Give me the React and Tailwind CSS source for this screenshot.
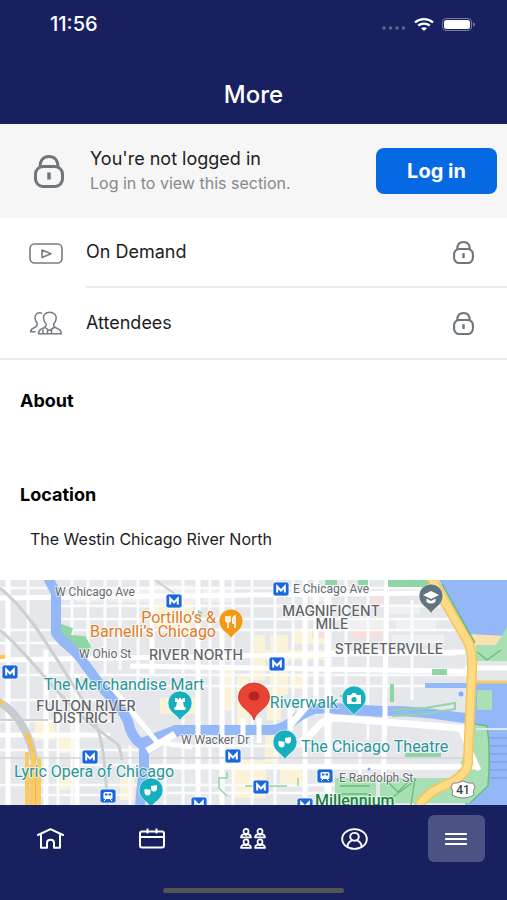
import React from "react";

function LockIcon({ className }) {
  return (
    <svg viewBox="0 0 30 33" fill="none" stroke="#6f767b" strokeWidth="3" className={className} aria-hidden="true">
      <rect x="1.5" y="11.5" width="27" height="20" rx="7.5" />
      <path d="M6 12C6 5.500 9.500 1.500 15 1.500S24 5.500 24 12" />
      <path d="M15 17.500v7" strokeWidth="3.500" />
    </svg>
  );
}

function VideoIcon() {
  return (
    <svg viewBox="0 0 34 21" fill="none" stroke="#777d82" strokeWidth="1.600" className="h-[21px] w-[34px]" aria-hidden="true">
      <rect x="1" y="1" width="32" height="19" rx="4.500" />
      <path d="M13 7v7.500l9-3.700z" strokeLinejoin="round" />
    </svg>
  );
}

function AttendeesIcon() {
  return (
    <svg viewBox="0 0 34 24" fill="none" stroke="#777d82" strokeWidth="1.500" strokeLinejoin="round" strokeLinecap="round" className="h-[24px] w-[34px]" aria-hidden="true">
      <path d="M12.500 2.200C9 1 5.800 3 6 7c.1 2 .8 3.500 1.900 4.600.7 2.400-.2 4-2.400 4.900C3 17.500 1.800 18.500 1.500 20.800H6" />
      <path d="M20.500 1.200c-4 0-6.300 2.700-6 6.300.2 2.200 1.200 3.900 2.600 5.200.5 2.500-.6 3.700-3.100 4.500-3 .9-4.300 2.100-4.500 5.600h22.800c-.2-3.500-1.600-4.700-4.600-5.600-2.500-.8-3.500-2-3-4.500 1.400-1.300 2.300-3 2.500-5.200.3-3.600-2.500-6.300-6.700-6.300z" />
      <path d="M16 16.500l4.500 3 4.700-3M18.500 19v3.600M22.500 19v3.600M14 19v3.600" />
    </svg>
  );
}

const navIcons = {
  Home: (
    <svg viewBox="0 0 27 21" fill="none" stroke="currentColor" strokeWidth="2" strokeLinejoin="round" strokeLinecap="round" className="h-[21px] w-[27px]" aria-hidden="true">
      <path d="M1 7L13.500 1.200 26 7M4 6v13.800h6V15c0-4.200 7-4.200 7 0v4.800h6V6" />
    </svg>
  ),
  Agenda: (
    <svg viewBox="0 0 26 21" fill="none" stroke="currentColor" strokeWidth="2" className="h-[21px] w-[26px]" aria-hidden="true">
      <rect x="1" y="3.500" width="24" height="16" rx="2" />
      <path d="M1 9h24M8.500 0.500v5M17.500 0.500v5" />
    </svg>
  ),
  Groups: (
    <svg viewBox="0 0 26 21" fill="none" stroke="currentColor" strokeWidth="1.700" strokeLinejoin="round" className="h-[21px] w-[26px]" aria-hidden="true">
      {[0, 14].map((x) =>
        [0, 10.5].map((y) => (
          <g key={`${x}-${y}`} transform={`translate(${x} ${y})`}>
            <circle cx="6" cy="3.400" r="2.500" />
            <path d="M1 9.300c.2-2 1.200-2.800 3.200-3.200l1.800 1 1.800-1c2 .4 3 1.200 3.200 3.200z" />
          </g>
        ))
      )}
    </svg>
  ),
  Profile: (
    <svg viewBox="0 0 27 22" fill="none" stroke="currentColor" strokeWidth="1.900" className="h-[22px] w-[27px]" aria-hidden="true">
      <ellipse cx="13.500" cy="11" rx="12.300" ry="9.900" />
      <ellipse cx="13.500" cy="8.800" rx="4.300" ry="3.900" />
      <path d="M6.300 18.500c.4-3.300 2-5.200 5-6.100M20.700 18.500c-.4-3.300-2-5.200-5-6.100" />
    </svg>
  ),
  More: (
    <svg viewBox="0 0 24 14" fill="none" stroke="currentColor" strokeWidth="2.200" strokeLinecap="round" className="h-[14px] w-[24px]" aria-hidden="true">
      <path d="M2 2h20M2 7h20M2 12h20" />
    </svg>
  ),
};

function Station({ x, y, train }) {
  return (
    <g transform={`translate(${x} ${y})`}>
      <rect x="-8" y="-7" width="16" height="14" rx="2.500" fill="#1b68dc" stroke="#fff" strokeWidth="0.800" />
      {train ? (
        <g>
          <rect x="-4.500" y="-4" width="9" height="7" rx="1.500" fill="#fff" />
          <path d="M-3-2.500h2.400v2H-3zM.6-2.500H3v2H.6z" fill="#1b68dc" />
          <path d="M-4 5l2-2M4 5L2 3" stroke="#fff" />
        </g>
      ) : (
        <path d="M-3.800 3.500v-6L0 1.500l3.800-4v6" fill="none" stroke="#fff" strokeWidth="2" />
      )}
    </g>
  );
}

function Pin({ x, y, color, children }) {
  return (
    <g transform={`translate(${x} ${y})`}>
      <path d="M0 17C-1.500 11-12 9-12-1a12 12 0 0 1 24 0C12 9 1.500 11 0 17z" fill={color} stroke="#fff" strokeWidth="0.600" />
      {children}
    </g>
  );
}

const masks = (
  <g fill="#fff">
    <path d="M-6.500-2l6 .8v3.500c-.7 3-5 3-6-.3z" />
    <path d="M0-5l6-1v4c-.6 3-4.500 3.500-5.800.8z" />
  </g>
);

const blocks = [
  [76, 8, 26, 14], [108, 8, 42, 14], [155, 8, 42, 14], [203, 8, 32, 14], [310, 8, 20, 14],
  [390, 24, 30, 10], [396, 40, 40, 10], [392, 55, 52, 9], [340, 40, 46, 8],
];

function CityMap() {
  return (
    <svg viewBox="0 0 507 225" preserveAspectRatio="xMidYMid slice" role="img" aria-label="Map of downtown Chicago" className="block h-[225px] w-full font-[Roboto,sans-serif]">
      <rect width="507" height="225" fill="#e5e7ea" />

      {/* shaded commercial blocks */}
      <g fill="#fbf3d8">
        <path d="M155 5h38v50h-18v-8h-20zM250 55h15v45h-15zM270 55h18v60h-18zM293 50h34v14h-34zM237 95h12v60h-12zM160 118h36v16h-36zM222 85h12v45h-12zM265 70h60v10h-60zM290 95h16v14h-16zM267 110h14v30h-14zM234 180h32v38h-32zM280 185h22v22h-22zM265 155h14v28h-14zM120 198h14v22h-14zM60 155h16v18H60zM60 190h14v20H60zM35 140h20v20H35z" />
      </g>
      <path d="M373 12h8v16h-8zM353 38h28v20h-28zM312 50h16v8h-16z" fill="#f9dedd" />
      <g fill="#eef0f2">
        {blocks.map(([x, y, w, h]) => (
          <rect key={`${x}-${y}`} x={x} y={y} width={w} height={h} />
        ))}
      </g>

      {/* minor streets */}
      <path d="M0 8H430M60 26H440M60 39H450M64 50H455M0 50H50M0 95H470M110 106H470M0 63H60M0 120H100M0 141H110M0 170H150M170 166H380M80 185H470M0 205H340M30 215H130M160 213H340" stroke="#fafbfc" strokeWidth="2.500" fill="none" />
      <path d="M28 0V225M72 0V225M88 0V80M105 0V95M120 0V90M138 0V110M183 0V225M210 0V225M233 0V225M252 0V225M275 0V225M293 0V140M330 0V225M346 0V115M368 0V160M412 20V120M360 165V225M58 110V225M130 165V225M165 165V225" stroke="#fafbfc" strokeWidth="3" fill="none" />

      {/* major streets */}
      <path d="M0 18L507 12M0 80L465 72M330 73H455M130 86L507 92M0 155H110M150 187H465" stroke="#fff" strokeWidth="5" fill="none" />
      <path d="M8 0V225M46 70V225M152 0V95M198 0V225M222 0V225M316 0V135M327 0V225M387 0L383 225M305 0V225M77 95V225" stroke="#fff" strokeWidth="5" fill="none" />
      <path d="M0 178H470" stroke="#d3d5d8" strokeWidth="1.500" />

      {/* rail corridors */}
      <path d="M0 8C25 28 45 60 70 100S105 145 107 225M0 50C30 75 60 120 92 145S118 160 122 180" stroke="#cdd0d3" strokeWidth="3" fill="none" />
      <path d="M0 140H48M155 0l20 14" stroke="#cdd0d3" strokeWidth="2" />

      {/* parks along the north branch */}
      <path d="M61 44l12 4-2 7 14 1 6 10-3 7-16-6-12-12zM198 30l4 2v6l-5-2z" fill="#8fd5a5" />
      <path d="M325 0h12v5h-12zM358 0h10v5h-10zM388 0h46l3 7h-49z" fill="#8fd5a5" />

      {/* river */}
      <path d="M48-2l8 15v40c5 9 21 17 28 30l17 23c14 17 26 26 29 43 5 12 12 17 19 16 12-1 15-14 37-15h82c22 1 26-17 48-21 22-3 46 2 76 2 35 0 58 6 84 8" stroke="#94b8f7" strokeWidth="10" fill="none" strokeLinejoin="round" />
      <path d="M141 158L175 145H250V155H180L148 175zM345 126l30 1 8 10-50-3z" fill="#94b8f7" />
      <path d="M144 165v20l-4 40" stroke="#94b8f7" strokeWidth="10" fill="none" />
      <path d="M425 103h43v5h-43z" fill="#94b8f7" />
      <path d="M392 130l33-2 30-5v6l-30 5-33 2M340 116h26" stroke="#8fd5a5" strokeWidth="2" fill="none" />

      {/* bridges */}
      <path d="M198 138v25M222 138v25M243 138v25M259 138v25M290 127v28M327 120v28M385 125v24M112 107l45 55 35 5" stroke="#fff" strokeWidth="5" fill="none" />
      <path d="M147 171l28-17M310 122l-20 23M300 162C320 151 315 140 337 138L470 149" stroke="#fff" strokeWidth="7" fill="none" />

      {/* lake and shore */}
      <path d="M438-2H509V65L476 69z" fill="#94b8f7" />
      <path d="M469 54l38 2v14l-32-2z" fill="#fae2b0" />
      <path d="M476 65h20l11-18v34h-31z" fill="#a9dfb4" />
      <path d="M473 83h34v17h-34z" fill="#e4e6e8" />
      <path d="M470 102H507V225H465V145H470z" fill="#94b8f7" />
      <path d="M477 110h15v20h-15z" fill="#a9dfb4" />
      <path d="M475 144l12 2c4 25 2 45 1 60l-18 17H380V198h75z" fill="#a9dfb4" />
      <path d="M475 144l12 2c4 25 2 45 1 60l-18 17" stroke="#66bd7c" strokeWidth="1.500" fill="none" />
      <path d="M335 198h41v27h-41z" fill="#a9dfb4" />
      <path d="M386 200l12 12 14-14M386 222l30-22M415 198l-4 27M340 206h30M340 214h30M477 72l10 8 14-10" stroke="#66bd7c" strokeWidth="1.300" fill="none" />
      <path d="M432 89h15v6h-15zM405 173h36v4h-36zM390 104h4v18h-4z" fill="#8fd5a5" />
      <path d="M490 158h17M490 166h17M490 174h17M490 182h17M490 190h17M490 198h17" stroke="#719dde" strokeWidth="1" />
      <path d="M465 88h42M460 149l19 41M385 187h92" stroke="#fff" strokeWidth="5" fill="none" />
      <path d="M476 149h31" stroke="#dce6f8" strokeWidth="2" />
      <path d="M472 102h35" stroke="#f2cd69" strokeWidth="3" />
      <circle cx="461" cy="114" r="2.500" fill="#7fabf5" />
      <circle cx="369" cy="189" r="1.500" fill="#7fabf5" />
      <path d="M227 192v6h-8v10l8 8M245 206h42M298 198v8" stroke="#8fd5a5" strokeWidth="1.500" fill="none" />

      {/* highways */}
      <path d="M430-4L467 60q6 10 5 30l-4 90q1 14-20 24-24 9-31 26" stroke="#f3c55c" strokeWidth="10" fill="none" />
      <path d="M430-4L467 60q6 10 5 30l-4 90q1 14-20 24-24 9-31 26" stroke="#ffdb85" strokeWidth="7" fill="none" />
      <path d="M442 4l33 59" stroke="#66bd7c" strokeWidth="1.500" />
      <path d="M-4 120C24 135 32 165 34 180" stroke="#c9cccf" strokeWidth="8" fill="none" />
      <path d="M-2 120l5 4M0 77h5M26 153c6 13 7 18 8 27v45" stroke="#fbc64f" strokeWidth="4" fill="none" />
      <path d="M27 172v53M33 172v53M39 178v47" stroke="#fccb5c" strokeWidth="4" fill="none" />
      <path d="M30 185v40M36 185v40" stroke="#e9a83c" strokeWidth="1" />

      {/* transit stops */}
      <Station x={174} y={21} />
      <Station x={281} y={9} />
      <Station x={277} y={84} />
      <Station x={10} y={92} />
      <Station x={90} y={177} />
      <Station x={233} y={176} />
      <Station x={261} y={207} />
      <Station x={199} y={224} />
      <Station x={305} y={225} />
      <Station x={325} y={196} train />
      <Station x={108} y={216} train />

      {/* labels */}
      <g stroke="#fff" strokeOpacity="0.700" strokeWidth="2" paintOrder="stroke" strokeLinejoin="round">
        <g fill="#66696c" className="text-[12px]">
          <text x="55" y="16">W Chicago Ave</text>
          <text x="293" y="13">E Chicago Ave</text>
          <text x="79" y="78">W Ohio St</text>
          <text x="181" y="164">W Wacker Dr</text>
          <text x="339" y="202">E Randolph St</text>
        </g>
        <g fill="#5f6368" textAnchor="middle" className="font-[Inter,sans-serif] text-[14px] font-medium">
          <text x="196" y="80">RIVER NORTH</text>
          <text x="331" y="36">MAGNIFICENT</text>
          <text x="332" y="49">MILE</text>
          <text x="389" y="74">STREETERVILLE</text>
          <text x="86" y="131">FULTON RIVER</text>
          <text x="85" y="143">DISTRICT</text>
        </g>
        <g className="text-[16px]">
          <text x="216" y="43" textAnchor="end" fill="#e07c25">Portillo’s &amp;</text>
          <text x="216" y="57" textAnchor="end" fill="#e07c25">Barnelli’s Chicago</text>
          <text x="124" y="110" textAnchor="middle" fill="#289599">The Merchandise Mart</text>
          <text x="338" y="128" textAnchor="end" fill="#289599">Riverwalk</text>
          <text x="301" y="172" fill="#289599">The Chicago Theatre</text>
          <text x="94" y="197" textAnchor="middle" fill="#289599">Lyric Opera of Chicago</text>
          <text x="315" y="226" fill="#188044" className="font-medium">Millennium</text>
        </g>
      </g>

      {/* places */}
      <Pin x={231} y={42} color="#f29a16">
        <path d="M-5-6v4q0 2 2 2t2-2v-4M-3-6V6M4 6V-6Q1-4 2 1h2" stroke="#fff" strokeWidth="1.600" fill="none" />
      </Pin>
      <Pin x={431} y={17} color="#62757f">
        <path d="M-8-2l8-4 8 4-8 4zM-4.500 1.500V5q4.500 3 9 0V1.500L0 4z" fill="#fff" />
      </Pin>
      <Pin x={180} y={124} color="#15afbf">
        <path d="M-5-6h2.500v1.500h1.500V-6h2v1.500h1.500V-6H5v4H3l1 5h1.500v3h-11V3H-4l1-5h-2z" fill="#fff" />
      </Pin>
      <Pin x={354} y={119} color="#15afbf">
        <path d="M-7-4h4l1.500-2h3L3-4h4v9H-7z" fill="#fff" />
        <circle cy="0.500" r="2.600" fill="#15afbf" />
      </Pin>
      <Pin x={285} y={163} color="#15afbf">{masks}</Pin>
      <Pin x={151} y={211} color="#15afbf">{masks}</Pin>
      <path d="M254 140C252 131 238.500 128 238.500 117a15.500 14 0 0 1 31 0C269.500 128 256 131 254 140z" fill="#e94335" stroke="#c5362b" strokeWidth="0.800" />
      <ellipse cx="254" cy="116" rx="5.500" ry="4.500" fill="#b4251f" />

      {/* route shield */}
      <path d="M453 203q4 1 10-2 6 3 10 2l2 4q-3 4-1 8-5 3-11 3t-11-3q2-4-1-8z" fill="#fff" stroke="#85898c" strokeWidth="1" />
      <text x="463" y="214" textAnchor="middle" fill="#3c4043" className="text-[12px] font-medium">41</text>
    </svg>
  );
}

const sections = [
  { label: "On Demand", icon: <VideoIcon /> },
  { label: "Attendees", icon: <AttendeesIcon /> },
];

export default function App() {
  return (
    <div className="flex min-h-screen flex-col bg-white font-[Inter,'Liberation_Sans',sans-serif] text-[#1c1c1e]">
      <header className="flex h-[124px] flex-col bg-[#18205f] text-white">
        <div className="flex h-12 items-center justify-between pr-8 pl-[50px]">
          <span className="text-[20px] leading-6 font-medium">11:56</span>
          <div className="flex items-center gap-2">
            <svg viewBox="0 0 24 4" fill="#5f658f" className="mt-2 h-[4px] w-[24px]" aria-hidden="true">
              <circle cx="2" cy="2" r="1.800" />
              <circle cx="8.500" cy="2" r="1.800" />
              <circle cx="15" cy="2" r="1.800" />
              <circle cx="21.500" cy="2" r="1.800" />
            </svg>
            <svg viewBox="0 0 20 13" fill="none" stroke="#fff" strokeWidth="2.300" className="h-[13px] w-[20px]" aria-hidden="true">
              <path d="M1 4.500c5-4.400 13-4.400 18 0M4.200 7.700c3.300-2.900 8.300-2.900 11.600 0" />
              <path d="M7 10.300c1.800-1.500 4.200-1.500 6 0L10 13z" fill="#fff" stroke="none" />
            </svg>
            <svg viewBox="0 0 33 13" fill="none" className="h-[13px] w-[33px]" aria-hidden="true">
              <rect x="0.500" y="0.500" width="29" height="12" rx="3.500" stroke="#777c9f" />
              <rect x="2" y="2" width="26" height="9" rx="2.500" fill="#fff" />
              <path d="M31 4.500q2 .5 2 2t-2 2z" fill="#777c9f" />
            </svg>
          </div>
        </div>
        <h1 className="mt-8 text-center text-[24px] leading-[30px] font-medium">More</h1>
      </header>

      <main className="flex flex-1 flex-col">
        <section className="flex h-[94px] items-center bg-[#f6f6f6] pr-[10px] pl-[34px]">
          <LockIcon className="h-[33px] w-[30px] shrink-0" />
          <div className="ml-[26px] flex-1">
            <p className="text-[18px] leading-6">You're not logged in</p>
            <p className="text-[16px] leading-6 text-[#85888c]">Log in to view this section.</p>
          </div>
          <button type="button" className="h-[46px] w-[121px] rounded-lg bg-[#0569e3] text-[20px] font-bold text-white">
            Log in
          </button>
        </section>

        <ul>
          {sections.map(({ label, icon }, i) => (
            <li key={label} className={i === 1 ? "border-b-2 border-[#e9eaeb]" : ""}>
              <a href="#" className="flex items-center pl-[29px]">
                <span className="flex w-[57px] items-center">{icon}</span>
                <span className={`flex h-[70px] flex-1 items-center justify-between pr-[33px] text-[18px] leading-6 ${i === 0 ? "border-b-2 border-[#e9eaeb]" : ""}`}>
                  {label}
                  <LockIcon className="h-[23px] w-[21px]" />
                </span>
              </a>
            </li>
          ))}
        </ul>

        <section className="h-[94px] px-5 pt-[29px]">
          <h2 className="text-[18px] leading-6 font-bold text-black">About</h2>
        </section>
        <section className="px-5 pt-[29px] pb-[29px]">
          <h2 className="text-[18px] leading-6 font-bold text-black">Location</h2>
          <address className="mt-5 px-[10px] text-[16px] leading-6 not-italic">The Westin Chicago River North</address>
        </section>
        <CityMap />
      </main>

      <nav className="flex h-[95px] flex-col items-center justify-between bg-[#18205f] pt-[10px] pb-[7px] text-white">
        <div className="grid w-full grid-cols-5">
          {Object.entries(navIcons).map(([label, icon]) => (
            <button
              key={label}
              type="button"
              aria-label={label}
              className={`mx-auto flex h-[47px] w-[57px] items-center justify-center rounded-md ${label === "More" ? "bg-[#4c5283]" : ""}`}
            >
              {icon}
            </button>
          ))}
        </div>
        <div className="h-[5px] w-[181px] rounded-full bg-[#535456]" />
      </nav>
    </div>
  );
}
